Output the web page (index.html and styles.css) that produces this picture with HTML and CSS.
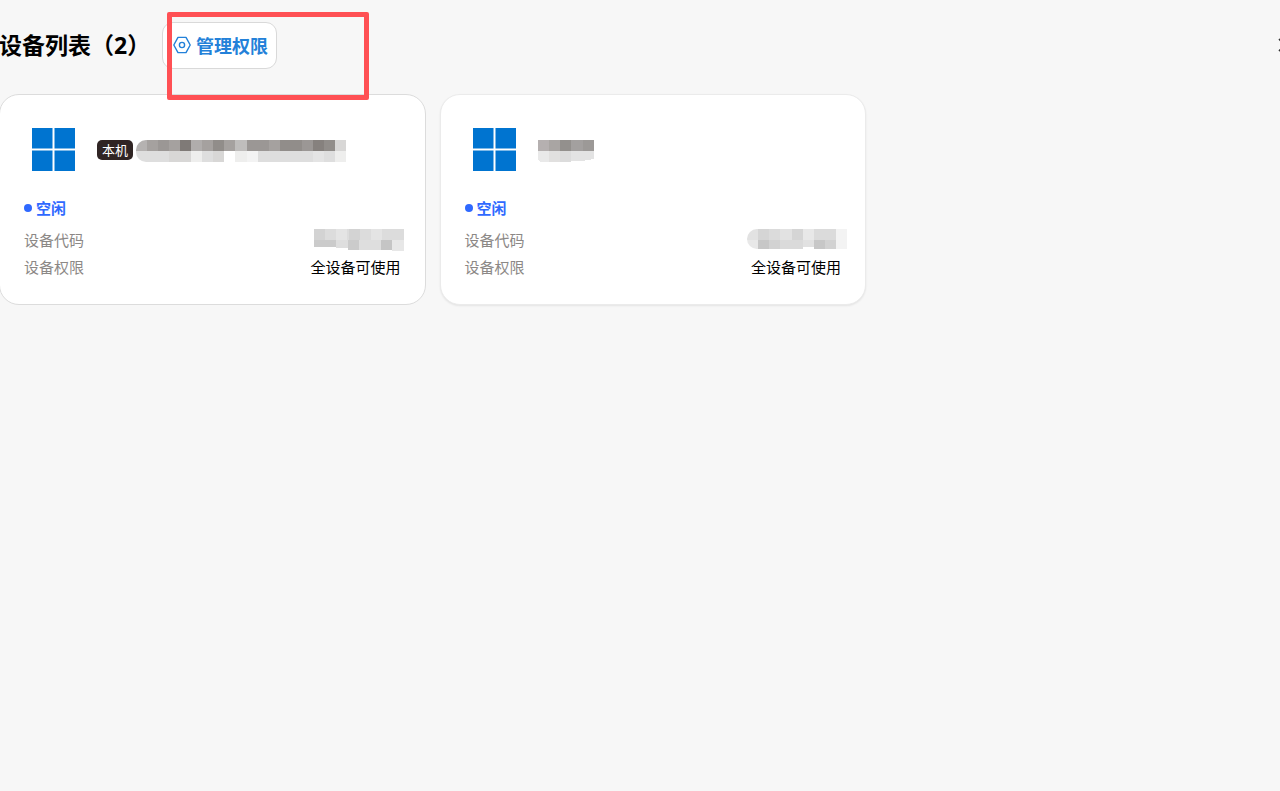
FILE: index.html
```html
<!DOCTYPE html>
<html lang="zh-CN">
<head>
    <meta charset="UTF-8">
    <meta name="viewport" content="width=device-width, initial-scale=1.0">
    <title>设备列表</title>
    <link rel="stylesheet" href="styles.css">
</head>
<body>
    <header class="page-header">
        <h1>设备列表（2）</h1>
        <div class="manage">
            <button class="manage-btn" type="button">
                <svg width="18" height="18" viewBox="0 0 18 18" fill="none" stroke="currentColor" stroke-width="1.4" stroke-linejoin="round" aria-hidden="true">
                    <path d="M5 1.4h8L17.2 9 13 16.6H5L.8 9z"/>
                    <circle cx="9" cy="9" r="2.6"/>
                </svg>
                管理权限
            </button>
            <div class="highlight"></div>
        </div>
        <button class="close-btn" type="button" aria-label="关闭">
            <svg width="14" height="14" viewBox="0 0 14 14" stroke="currentColor" stroke-width="1.6" aria-hidden="true">
                <path d="M1 1l12 12M13 1L1 13"/>
            </svg>
        </button>
    </header>

    <main class="device-grid">
        <section class="card current">
            <div class="card-top">
                <svg class="win-logo" width="43" height="43" viewBox="0 0 43 43" fill="#0074d0" aria-hidden="true">
                    <path d="M0 0h20.5v20.5H0zM22.5 0H43v20.5H22.5zM0 22.5h20.5V43H0zM22.5 22.5H43V43H22.5z"/>
                </svg>
                <div class="device-name">
                    <span class="tag">本机</span>
                    <svg class="mask mask-round" width="210" height="22" viewBox="0 0 19 2" preserveAspectRatio="none" shape-rendering="crispEdges" aria-hidden="true">
                        <path fill="#b5b2b1" d="M0 0h1v1H0z"/>
                        <path fill="#a5a19f" d="M1 0h1v1H1zM3 0h1v1H3zM6 0h1v1H6zM8 0h1v1H8zM12 0h1v1h-1z"/>
                        <path fill="#9b9795" d="M2 0h1v1H2zM10 0h2v1h-2zM15 0h1v1h-1z"/>
                        <path fill="#7f7a77" d="M4 0h1v1H4z"/>
                        <path fill="#b0adac" d="M5 0h1v1H5z"/>
                        <path fill="#918d8a" d="M7 0h1v1H7zM13 0h2v1h-2zM17 0h1v1h-1z"/>
                        <path fill="#bfbdbc" d="M9 0h1v1H9z"/>
                        <path fill="#86817e" d="M16 0h1v1h-1z"/>
                        <path fill="#d8d7d6" d="M18 0h1v1h-1zM3 1h2v1H3zM7 1h1v1H7z"/>
                        <path fill="#dedede" d="M0 1h3v1H0zM6 1h1v1H6zM11 1h5v1h-5zM17 1h1v1h-1z"/>
                        <path fill="#e4e4e4" d="M16 1h1v1h-1z"/>
                        <path fill="#eeeeed" d="M5 1h1v1H5zM9 1h1v1H9zM18 1h1v1h-1z"/>
                        <path fill="#f3f3f3" d="M10 1h1v1h-1z"/>
                    </svg>
                </div>
            </div>
            <p class="status">空闲</p>
            <dl class="info">
                <div class="row">
                    <dt>设备代码</dt>
                    <dd class="code">
                        <svg class="mask" width="90" height="22" viewBox="0 0 90 22" shape-rendering="crispEdges" aria-hidden="true">
                            <path fill="#dcdcdc" d="M0 0h90v11H0z"/>
                            <path fill="#d3d3d3" d="M0 0h11v11H0zM35 0h11v11H35z"/>
                            <path fill="#e4e4e4" d="M22 0h11v11H22zM57 0h11v11H57z"/>
                            <path fill="#cbcbcb" d="M0 11h22v7H0zM34 11h11v10H34z"/>
                            <path fill="#dedede" d="M22 11h12v8H22zM45 11h22v10H45z"/>
                            <path fill="#c5c5c5" d="M67 11h11v10H67z"/>
                            <path fill="#e7e7e7" d="M78 11h12v11H78z"/>
                        </svg>
                    </dd>
                </div>
                <div class="row">
                    <dt>设备权限</dt>
                    <dd>全设备可使用</dd>
                </div>
            </dl>
        </section>

        <section class="card">
            <div class="card-top">
                <svg class="win-logo" width="43" height="43" viewBox="0 0 43 43" fill="#0074d0" aria-hidden="true">
                    <path d="M0 0h20.5v20.5H0zM22.5 0H43v20.5H22.5zM0 22.5h20.5V43H0zM22.5 22.5H43V43H22.5z"/>
                </svg>
                <div class="device-name">
                    <svg class="mask" width="56" height="22" viewBox="0 0 56 22" shape-rendering="crispEdges" aria-hidden="true">
                        <path fill="#b5b0b0" d="M0 0h11v11H0z"/>
                        <path fill="#a9a5a3" d="M11 0h11v11H11z"/>
                        <path fill="#93908d" d="M22 0h11v11H22z"/>
                        <path fill="#a3a09f" d="M33 0h12v11H33z"/>
                        <path fill="#9c9997" d="M45 0h11v11H45z"/>
                        <path fill="#e9e9e9" d="M0 11h11v11H3l-3-2z"/>
                        <path fill="#e1e0df" d="M11 11h11v11H11z"/>
                        <path fill="#dcdcdc" d="M22 11h11v11H22z"/>
                        <path fill="#e3e3e3" d="M33 11h23v8l-12 2H33z"/>
                    </svg>
                </div>
            </div>
            <p class="status">空闲</p>
            <dl class="info">
                <div class="row">
                    <dt>设备代码</dt>
                    <dd class="code code-wide">
                        <svg class="mask mask-round" width="100" height="20" viewBox="0 0 100 20" shape-rendering="crispEdges" aria-hidden="true">
                            <path fill="#e2e2e2" d="M0 0h100v11H0z"/>
                            <path fill="#d5d5d5" d="M11 0h11v11H11zM45 0h11v11H45z"/>
                            <path fill="#dbdbdb" d="M22 0h11v11H22zM67 0h22v11H67z"/>
                            <path fill="#e8e8e8" d="M56 0h11v11H56zM0 11h11v9H0z"/>
                            <path fill="#c7c7c7" d="M11 11h11v9H11zM67 11h11v9H67z"/>
                            <path fill="#d2d2d2" d="M22 11h11v9H22zM78 11h11v9H78z"/>
                            <path fill="#dadada" d="M33 11h23v9H33z"/>
                            <path fill="#e1e1e1" d="M56 11h11v7H56z"/>
                            <path fill="#f3f3f3" d="M89 0h11v20H89z"/>
                        </svg>
                    </dd>
                </div>
                <div class="row">
                    <dt>设备权限</dt>
                    <dd>全设备可使用</dd>
                </div>
            </dl>
        </section>
    </main>
</body>
</html>
```
FILE: styles.css
```css
* {
    box-sizing: border-box;
}
body {
    margin: 0;
    min-height: 100vh;
    overflow-x: hidden;
    background-color: #f7f7f7;
    color: #000000;
    font-family: "Noto Sans", "Noto Sans CJK SC", sans-serif;
    font-size: 15px;
}
.page-header {
    display: flex;
    align-items: center;
    padding-top: 22px;
    margin: 0 -12px 0 -1px;
}
h1 {
    margin: 0;
    padding-bottom: 2px;
    width: 163px;
    font-size: 23px;
    line-height: 32px;
    font-weight: bold;
    white-space: nowrap;
}
.manage {
    position: relative;
}
.manage-btn {
    display: flex;
    align-items: center;
    gap: 5px;
    height: 47px;
    padding: 0 8px 2px 10px;
    border: 1px solid #d9d9d9;
    border-radius: 11px;
    background-color: #ffffff;
    color: #2381d9;
    font-family: inherit;
    font-size: 18px;
    font-weight: bold;
    white-space: nowrap;
    cursor: pointer;
}
.manage-btn svg {
    flex: none;
}
/* red marker drawn over the button */
.highlight {
    position: absolute;
    top: -10px;
    left: 5px;
    width: 202px;
    height: 88px;
    border: 5px solid #ff5054;
    border-radius: 2px;
    pointer-events: none;
}
.close-btn {
    display: flex;
    margin-left: auto;
    padding: 0 0 2px;
    border: none;
    background: none;
    color: #333333;
    cursor: pointer;
}
.device-grid {
    display: grid;
    grid-template-columns: repeat(2, 33.3%);
    gap: 14px;
    margin: 25px 0 0 -1px;
}
.card {
    padding: 33px 24px 23px;
    border: 1px solid #ebebeb;
    border-radius: 20px;
    background-color: #ffffff;
    box-shadow: 0 1px 2px rgba(0, 0, 0, 0.08);
}
.current {
    border-color: #dcdcdc;
    box-shadow: none;
}
.card-top {
    display: flex;
    align-items: center;
    gap: 22px;
    padding-left: 8px;
}
.device-name {
    display: flex;
    align-items: center;
    gap: 3px;
}
.tag {
    padding: 0 5px;
    border-radius: 5px;
    background-color: #302524;
    color: #ffffff;
    font-size: 13px;
    line-height: 20px;
}
.mask {
    display: block;
    margin-top: 2px;
}
.mask-round {
    border-radius: 10px 0 0 10px;
}
.status {
    display: flex;
    align-items: center;
    gap: 4px;
    margin: 26px 0 8px;
    color: #2f69ff;
    font-weight: bold;
    line-height: 22px;
}
.status::before {
    content: "";
    width: 8px;
    height: 8px;
    border-radius: 50%;
    background-color: #2f69ff;
}
.info {
    margin: 0;
}
.row {
    display: flex;
    justify-content: space-between;
    line-height: 27px;
}
dt {
    color: #8c8886;
}
dd {
    margin: 0;
}
.code {
    margin-right: -3px;
}
.code-wide {
    margin-right: -6px;
}
```
